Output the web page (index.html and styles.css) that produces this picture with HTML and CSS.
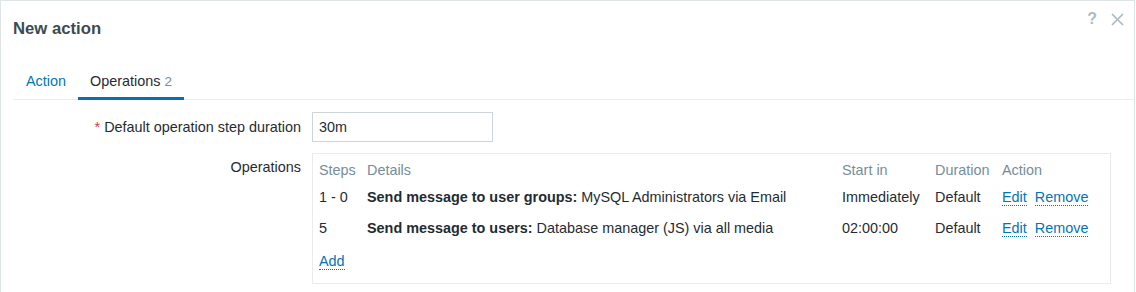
FILE: index.html
```html
<!DOCTYPE html>
<html lang="en">
<head>
  <meta charset="utf-8" />
  <title>New action</title>
  <link rel="stylesheet" href="styles.css">
</head>
<body>
  <div class="dialog">
    <div class="dialog-head">
      <h4>New action</h4>
      <div class="head-icons">
        <span class="icon-help">?</span>
        <svg class="icon-close" width="13" height="13" viewBox="0 0 13 13">
          <path d="M1 1 L12 12 M12 1 L1 12" stroke="#acbbc2" stroke-width="1.7" fill="none" />
        </svg>
      </div>
    </div>

    <ul class="tabs">
      <li><a class="link">Action</a></li>
      <li class="active">Operations <span class="count">2</span></li>
    </ul>

    <div class="form">
      <div class="row">
        <label class="label"><span class="req">*</span> Default operation step duration</label>
        <div class="field">
          <input type="text" class="text-input" value="30m" />
        </div>
      </div>
      <div class="row">
        <label class="label label-top">Operations</label>
        <div class="field">
          <div class="ops-box">
            <table class="ops">
              <thead>
                <tr>
                  <th class="c-steps">Steps</th>
                  <th class="c-details">Details</th>
                  <th class="c-start">Start in</th>
                  <th class="c-dur">Duration</th>
                  <th class="c-act">Action</th>
                </tr>
              </thead>
              <tbody>
                <tr>
                  <td>1 - 0</td>
                  <td><b>Send message to user groups:</b> MySQL Administrators via Email</td>
                  <td>Immediately</td>
                  <td>Default</td>
                  <td><a class="link">Edit</a><a class="link">Remove</a></td>
                </tr>
                <tr>
                  <td>5</td>
                  <td><b>Send message to users:</b> Database manager (JS) via all media</td>
                  <td>02:00:00</td>
                  <td>Default</td>
                  <td><a class="link">Edit</a><a class="link">Remove</a></td>
                </tr>
                <tr>
                  <td colspan="5" class="add-cell"><a class="link">Add</a></td>
                </tr>
              </tbody>
            </table>
          </div>
        </div>
      </div>
    </div>
  </div>
</body>
</html>
```

FILE: styles.css
```css
* {
    margin: 0;
    padding: 0;
    box-sizing: border-box;
}

body {
    background-color: #ffffff;
    font-family: "Liberation Sans", Arial, sans-serif;
    font-size: 14.4px;
    color: #1f2c33;
}

.dialog {
    width: 1135px;
    height: 292px;
    border: 1px solid #dfe4e7;
    border-bottom: none;
    background-color: #ffffff;
}

.dialog-head {
    display: flex;
    justify-content: space-between;
    align-items: flex-start;
    padding: 18px 12px 0 12px;
    height: 63px;
}

h4 {
    font-size: 16.7px;
    font-weight: bold;
    color: #3b4b54;
}

.head-icons {
    display: flex;
    align-items: center;
    gap: 14px;
    margin-top: -9px;
    margin-right: -2px;
}

.icon-help {
    font-size: 16px;
    font-weight: bold;
    color: #acbbc2;
}

.tabs {
    list-style: none;
    display: flex;
    margin: 0 0 0 12px;
    border-bottom: 1px solid #ebeef0;
    height: 36px;
}

.tabs li {
    padding: 9px 12px 0 12px;
    height: 36px;
}

.tabs li:first-child {
    padding-left: 13px;
}

.tabs li.active {
    border-bottom: 3px solid #0a6eb0;
    color: #1f2c33;
}

.tabs .count {
    color: #768d99;
    font-size: 13.5px;
}

.link {
    color: #0275b8;
    cursor: pointer;
}

td .link {
    border-bottom: 1px dotted #0275b8;
    margin-right: 8px;
}

.form {
    padding-top: 12px;
}

.row {
    display: flex;
    margin-bottom: 11px;
}

.label {
    width: 300px;
    text-align: right;
    padding-top: 7px;
    flex-shrink: 0;
}

.label-top {
    padding-top: 6px;
}

.req {
    color: #e33734;
}

.field {
    margin-left: 11px;
}

.text-input {
    width: 181px;
    height: 30px;
    border: 1px solid #cdd5da;
    padding: 0 6px;
    font-family: "Liberation Sans", Arial, sans-serif;
    font-size: 14.4px;
    color: #1f2c33;
}

.ops-box {
    width: 799px;
    height: 131px;
    border: 1px solid #ebebeb;
    padding: 4px 6px;
}

.ops {
    border-collapse: collapse;
    width: 100%;
    table-layout: fixed;
}

.ops th {
    font-weight: normal;
    color: #768d99;
    text-align: left;
    padding: 4px 0 4px 0;
}

.ops td {
    padding: 7px 0 8px 0;
    vertical-align: top;
    white-space: nowrap;
}

.c-steps { width: 48px; }
.c-details { width: 475px; }
.c-start { width: 93px; }
.c-dur { width: 67px; }
.c-act { width: 103px; }

.ops td.add-cell {
    padding-top: 9px;
}
```
